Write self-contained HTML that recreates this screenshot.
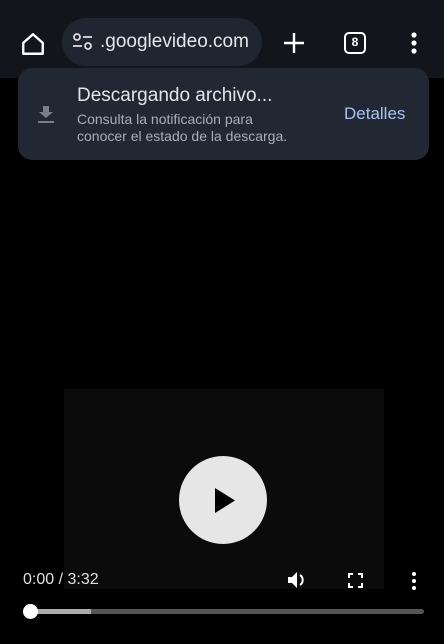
<!DOCTYPE html>
<html><head><meta charset="utf-8"><style>
*{margin:0;padding:0;box-sizing:border-box}
body{width:444px;height:644px;background:#000;position:relative;overflow:hidden;font-family:"Liberation Sans",Roboto,sans-serif}
.tb{position:absolute;left:0;top:0;width:444px;height:78px;background:#12161c}
.url{position:absolute;left:62px;top:18px;width:200px;height:48px;border-radius:24px;background:#1f2631}
.url span{position:absolute;left:38px;top:13px;font-size:19px;color:#e4e6ea}
.card{position:absolute;left:18px;top:68px;width:411px;height:92px;border-radius:14px;background:#212833}
.t1{position:absolute;left:59px;top:17px;font-size:19px;color:#e3e5e9}
.t2{position:absolute;left:59px;top:43px;font-size:14px;line-height:17px;color:#a9aeb6}
.det{position:absolute;left:326px;top:36px;font-size:17px;color:#a8c4f2}
.vid{position:absolute;left:64px;top:389px;width:320px;height:200px;background:#0b0b0b}
.play{position:absolute;left:179px;top:456px;width:88px;height:88px;border-radius:50%;background:#e6e6e6}
.time{position:absolute;left:23px;top:571px;font-size:16px;color:#e0e0e0}
</style></head><body>
<div class="tb"></div>
<svg style="position:absolute;left:20px;top:31px" width="26" height="26" viewBox="0 0 24 24"><path d="M3 11 L12 3 L21 11 V21 H3 Z" fill="none" stroke="#fff" stroke-width="2.2" stroke-linejoin="round"/></svg>
<div class="url"><svg style="position:absolute;left:10px;top:14px" width="22" height="20" viewBox="0 0 22 20"><circle cx="5" cy="5" r="3" fill="none" stroke="#ddd" stroke-width="1.8"/><line x1="11" y1="5" x2="20" y2="5" stroke="#ddd" stroke-width="1.8"/><line x1="1" y1="14" x2="10" y2="14" stroke="#ddd" stroke-width="1.8"/><circle cx="16" cy="14" r="3" fill="none" stroke="#ddd" stroke-width="1.8"/></svg><span>.googlevideo.com</span></div>
<svg style="position:absolute;left:283px;top:32px" width="22" height="22"><path d="M11 1V21M1 11H21" stroke="#fff" stroke-width="2.4"/></svg>
<div style="position:absolute;left:344px;top:32px;width:22px;height:22px;border:2.4px solid #fff;border-radius:5px;color:#fff;font-size:12px;font-weight:bold;text-align:center;line-height:17px">8</div>
<svg style="position:absolute;left:409px;top:31px" width="10" height="24"><circle cx="5" cy="4" r="2.6" fill="#fff"/><circle cx="5" cy="12" r="2.6" fill="#fff"/><circle cx="5" cy="20" r="2.6" fill="#fff"/></svg>
<div class="card">
<svg style="position:absolute;left:18px;top:36px" width="20" height="20" viewBox="0 0 20 20"><path d="M7 2H13V8H17L10 14L3 8H7Z" fill="#7a808a"/><rect x="2" y="17" width="16" height="2" fill="#7a808a"/></svg>
<div class="t1">Descargando archivo...</div>
<div class="t2">Consulta la notificación para<br>conocer el estado de la descarga.</div>
<div class="det">Detalles</div>
</div>
<div class="vid"></div>
<div class="play"><svg style="position:absolute;left:36px;top:32px" width="20" height="25"><path d="M0 0L20 12.5L0 25Z" fill="#000"/></svg></div>
<div class="time">0:00 / 3:32</div>
<svg style="position:absolute;left:287px;top:570px" width="20" height="20" viewBox="0 0 20 20"><path d="M1 7H5L10 2V18L5 13H1Z" fill="#fff"/><path d="M13 5A6 6 0 0 1 13 15" fill="none" stroke="#fff" stroke-width="2"/></svg>
<svg style="position:absolute;left:348px;top:573px" width="15" height="15"><path d="M1 5V1H5M10 1H14V5M14 10V14H10M5 14H1V10" fill="none" stroke="#fff" stroke-width="2"/></svg>
<svg style="position:absolute;left:410px;top:571px" width="8" height="20"><circle cx="4" cy="3" r="2" fill="#fff"/><circle cx="4" cy="10" r="2" fill="#fff"/><circle cx="4" cy="17" r="2" fill="#fff"/></svg>
<div style="position:absolute;left:30px;top:609px;width:394px;height:5px;border-radius:3px;background:#555"></div>
<div style="position:absolute;left:30px;top:609px;width:61px;height:5px;background:#aaa"></div>
<div style="position:absolute;left:23px;top:604px;width:15px;height:15px;border-radius:50%;background:#fff"></div>
</body></html>
